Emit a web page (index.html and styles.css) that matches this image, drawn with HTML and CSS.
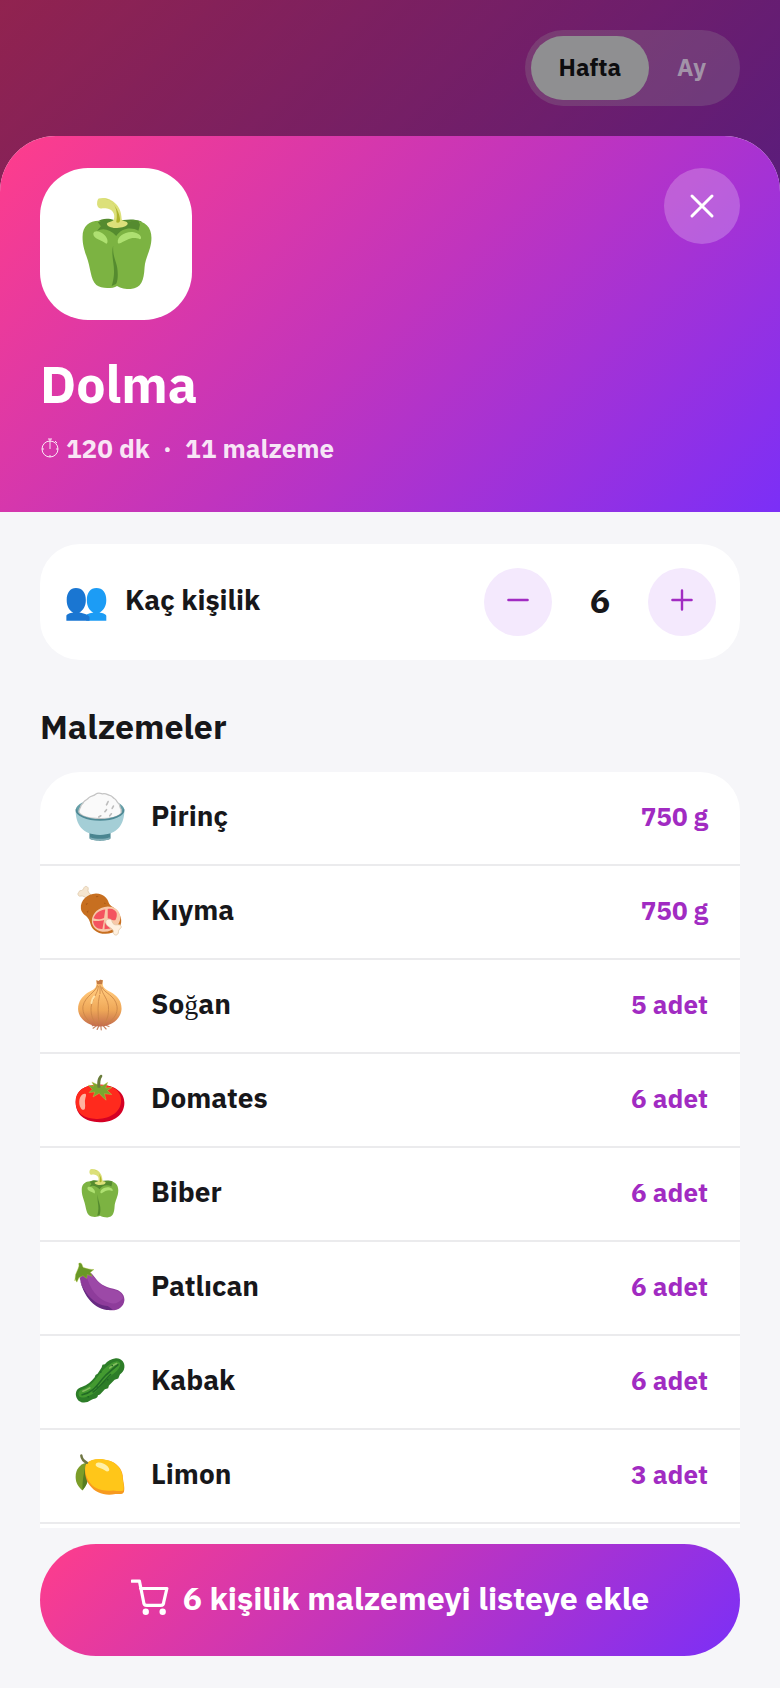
FILE: index.html
```html
<!DOCTYPE html>
<html lang="tr">
<head>
<meta charset="utf-8">
<meta name="viewport" content="width=device-width, initial-scale=1">
<title>Dolma</title>
<link rel="stylesheet" href="styles.css">
</head>
<body>
<svg class="defs" aria-hidden="true">
  <symbol id="pepper" viewBox="0 0 128 128">
    <path fill="#558b2f" d="M38 37c6-6 16-5 22-3 9 2 22-4 36 2l3 14-33 14-32-14z"/>
    <path fill="#7cb342" d="M19 56c0-14 9-21 21-21 10 1 13 8 21 12 8-3 12-11 24-12 15-1 24 8 24 22 0 16-8 25-9 39-1 17-4 27-18 28-7 0-13-1-18-4-6 4-21 4-27-1-8-8-7-22-13-38-3-9-5-15-5-25z"/>
    <path fill="#558b2f" d="M39 37c9-5 18 2 23 6 8-3 13-9 30-8l2 5-2 8c-9-5-22-4-29 7-8-9-17-11-25-7l5-6z"/>
    <path fill="#558b2f" d="M59 67c-4 18 5 27-1 50l-1 3 5-2c2-1 3-7 3-13 0-17-7-20-6-38z"/>
    <path fill="#aee071" d="M33 52c1-6 11-3 15 2 5 5 4 11 2 11-6-5-17-6-17-13zM65 63c-1-7 10-15 21-13 10 2 11 9 8 9-11-4-17 1-25 5-2 1-4 1-4-1z"/>
    <path fill="#dce07a" d="M40 6c12-4 30 6 30 26 0 5 8 2 8 7-2 7-24 7-27 1-2-4 8-3 9-7 2-7-2-13-9-14-8-1-11 2-13-5 0-3 0-6 2-8z"/>
    <path fill="#afb42b" d="M48 6c13 3 18 15 15 31 10 4 3-16-3-23-3-4-7-7-12-8z"/>
  </symbol>
  <symbol id="rice" viewBox="0 0 128 128">
    <path fill="#4a8590" d="M38 102h52v15c-8 7-44 7-52 0z"/>
    <path fill="#82aeb6" d="M40 114c12 5 36 5 48 0v4c-10 5-38 5-48 0z"/>
    <ellipse cx="64" cy="47" rx="60" ry="26" fill="#669fa8"/>
    <path fill="#fafafa" stroke="#c4c4c4" stroke-width="3" d="M12 52c0-9 5-11 5-16 3-5 6-5 7-9 5-6 9-5 12-10 6-6 13-4 17-9 7-5 13-2 17-1 8-3 13 3 18 4 7 1 7 6 12 8 5 3 5 8 9 11 6 6 2 9 7 15v10c-14 18-93 18-104-3z"/>
    <path fill="none" stroke="#bdbdbd" stroke-width="4" stroke-linecap="round" d="M84 26l-3 6M97 37l-3 6M80 46l-4 5M92 56l-4 5M66 61l-5 3M82 31l-2 3"/>
    <path fill="#a4ced6" d="M4 47c1 11 25 22 60 22s59-11 60-22c0 35-16 61-60 61S4 82 4 47z"/>
    <path fill="none" stroke="#4f8995" stroke-width="4" d="M6 45c-2 14 25 26 58 26s60-12 58-26"/>
  </symbol>
  <symbol id="meat" viewBox="0 0 128 128">
    <path fill="#f5e5cf" stroke="#dfc9aa" stroke-width="2" d="M12 18c-5 3-1 12 5 9 6-1 11 3 15 8l9-12c-5-3-8-8-6-13 1-6-7-9-10-4-2 6-5 8-10 8-2 1-3 2-3 4z"/>
    <path fill="#c76f20" d="M17 58c-2-21 16-36 37-37 20 0 29 13 32 24 3 8 15 10 23 22 12 18 8 34-3 44-13 12-43 13-57-1-10-10-8-21-15-29-6-7-16-11-17-23z"/>
    <path fill="#a75816" d="M29 46l6-2-5 6zM54 27l7 0-5 4zM31 66l5-4-2 7zM49 76l5-2-4 5zM75 43l4 3-5 0z"/>
    <ellipse cx="79" cy="84" rx="36" ry="30" fill="#f8c8a8" transform="rotate(-24 79 84)"/>
    <path fill="#f4535f" d="M48 82c4-12 15-21 29-22l-3 21c-8 4-17 5-26 1zM83 59c11-2 19 2 22 10 1 7 0 12-3 17-7 2-13-1-19-4zM47 88c10 2 20 0 27-2l-4 22c-13 1-22-6-23-20zM76 91l14 16-15 2z"/>
    <path fill="#fff0df" stroke="#dfc9aa" stroke-width="2" d="M78 91c1-9 15-10 16 0 2 6 7 8 13 7 8-2 13 6 6 10-4 2-3 6-4 10-2 8-12 6-12-1 1-6-4-10-11-14-5-3-8-7-8-12z"/>
  </symbol>
  <symbol id="onion" viewBox="0 0 128 128">
    <linearGradient id="onion-skin" x2="0" y2="1"><stop offset=".25" stop-color="#ffc576"/><stop offset=".65" stop-color="#eea758"/><stop offset="1" stop-color="#c26a4b"/></linearGradient>
    <path fill="none" stroke="#c78463" stroke-width="3" stroke-linecap="round" d="M59 112l-12 9M62 114l-5 10M66 114l1 11M70 113l9 10M74 112l12 5M55 113l-10 2"/>
    <path fill="url(#onion-skin)" d="M55 3l5 2 5-3 6 1c-2 17 2 20 19 29 18 10 28 24 27 43-2 22-21 40-53 42-32-2-53-20-54-43 0-18 10-33 29-43 15-8 17-11 16-28z"/>
    <path fill="#c47b45" d="M55 3l5 2 5-3 6 1-2 10H57z"/>
    <path fill="none" stroke="#c98445" stroke-width="2" d="M58 15C55 32 27 42 22 67c-2 20 10 32 19 41M60 17C59 37 45 45 42 70c-1 21 5 31 14 43M64 15v22M66 18c3 22 20 30 19 57 0 20-6 29-14 38M69 20c4 14 33 20 37 48 2 18-8 29-20 39M63 39c-5 22-5 45-1 73"/>
    <path fill="none" stroke="#ffe2a8" stroke-width="5" stroke-linecap="round" d="M50 43c-5 6-7 11-7 16"/>
  </symbol>
  <symbol id="tomato" viewBox="0 0 128 128">
    <path fill="#d50024" d="M4 72c0-28 21-42 53-43 39-2 67 16 67 44 0 30-25 48-61 48C27 121 4 102 4 72z"/>
    <path fill="#ff2a1d" d="M4 71c0-27 21-41 53-42 36-2 59 14 59 38 0 28-25 45-58 46-30 1-54-12-54-42z"/>
    <path fill="#ffb3a0" d="M26 51c5 0 4 5 2 11-3 9 1 16-1 25-1 5-7 5-10 0-8-13-4-35 9-36z"/>
    <path fill="#7ba52f" stroke="#cbc84c" stroke-width="1" d="M61 30L44 22l5 10-14-2 10 10-8 8 14-1-4 12 15-9 6 7 11 10-4-16 18 2-11-10 12-8-16 2 5-14-14 9z"/>
    <path fill="#6a7d3b" d="M58 36c-2-14 0-25 7-31 4-2 6 2 4 5-4 5-5 14-4 26z"/>
  </symbol>
  <symbol id="eggplant" viewBox="0 0 128 128">
    <path fill="#8e3c9b" d="M14 42C25 26 39 22 48 36c13 18 26 28 49 32 18 4 28 14 27 29-2 17-17 26-36 24C51 115 24 88 14 42z"/>
    <path fill="#a04dab" d="M30 34c10-4 17 3 24 12 12 13 23 20 42 25 15 3 22 8 25 20-9 11-21 17-34 12-29-8-48-33-57-69z" opacity=".75"/>
    <path fill="#682a82" d="M14 43c8 34 37 66 69 68l13 9c-38 6-72-27-82-77z"/>
    <path fill="#699827" stroke="#adc33c" stroke-width="1" d="M10 19l2-6c1-5-2-6 1-8 7-2 7 7 10 11 9 3 18 5 26 5l-9 7 5 10-12-5-2 10-9-7-10 5-5 11-4-7-1 4 2-16z"/>
  </symbol>
  <symbol id="cucumber" viewBox="0 0 128 128">
    <path fill="#2d7d28" d="M5 101c-2-12 4-19 14-22 14-5 24-14 32-24l2-6 5-3 10-15 2-7 6-1c6-8 16-14 27-15 13-1 23 10 21 23-1 8-5 13-11 17l-4 10-9 3-14 14-2 7-8 2-12 13-5 2c-2 11-10 6-17 12-15 11-33 7-37-10z"/>
    <path fill="#439a30" d="M11 96c0-9 8-10 16-14 24-12 34-38 53-53 14-12 31-20 34-7 0 16-25 28-34 38-14 15-21 31-43 40-13 6-25 8-26-4z"/>
    <path fill="none" stroke="#226b25" stroke-width="4" stroke-linecap="round" d="M20 98c31-7 40-30 57-47C88 41 98 32 108 24M47 91c17-11 30-32 43-43"/>
    <path fill="none" stroke="#85bd60" stroke-width="4" stroke-linecap="round" d="M22 89c7-2 12-5 17-8M88 32c6-6 11-9 17-11"/>
    <g fill="#1d6523"><circle cx="66" cy="42" r="2"/><circle cx="57" cy="79" r="2"/><circle cx="83" cy="61" r="2"/><circle cx="94" cy="26" r="2"/><circle cx="35" cy="103" r="2"/></g>
  </symbol>
  <symbol id="lemon" viewBox="0 0 128 128">
    <path fill="#7c9d29" d="M30 34C14 38 4 51 4 68c0 16 7 25 17 34 10-12 15-24 14-39z"/>
    <path fill="#567c21" d="M30 35c-4 18-10 40-9 66 12-13 15-27 14-42z"/>
    <path fill="#f79a20" d="M30 36c14-12 35-14 57-7 19 6 30 19 33 36 0 13 6 28 3 40-3 9-14 5-21 6-27 5-49-3-63-21-12-16-15-38-9-54z"/>
    <path fill="#ffc619" d="M30 36c14-13 36-14 57-7 18 6 29 19 32 36 0 12 5 24 3 35-3 6-16 3-25 2-31 3-49-5-60-22-9-15-12-31-7-44z"/>
    <path fill="#fff0a5" d="M54 36c6-6 20-1 27 5 6 5 8 12 3 14-6 1-8-4-14-6-8-3-20-6-16-13z"/>
    <path fill="none" stroke="#6f7644" stroke-width="6" stroke-linecap="round" d="M18 16c1 9 6 14 14 18"/>
  </symbol>
</svg>

<div class="screen">
  <header class="topbar">
    <div class="toggle">
      <button type="button" class="toggle-item is-active">Hafta</button>
      <button type="button" class="toggle-item">Ay</button>
    </div>
  </header>

  <main class="sheet">
    <section class="hero">
      <div class="hero-top">
        <div class="dish"><svg class="dish-icon" aria-hidden="true"><use href="#pepper"/></svg></div>
        <button type="button" class="close" aria-label="Kapat">
          <svg class="icon-close" viewBox="0 0 26 26" aria-hidden="true"><path d="M3 3l20 20M23 3L3 23"/></svg>
        </button>
      </div>
      <h1 class="title">Dolma</h1>
      <p class="meta">
        <svg class="icon-timer" viewBox="0 0 18 20" aria-hidden="true"><circle cx="9" cy="11" r="8"/><path d="M9 11V1M7 1h4M14 3l2 2M9 17v2M1 11h2M15 11h2"/></svg>
        <span>120 dk</span><span class="dot">·</span><span>11 malzeme</span>
      </p>
    </section>

    <div class="content">
      <section class="servings">
        <svg class="people" viewBox="0 0 122 100" aria-hidden="true">
          <path fill="#1c9cf5" d="M91 0c19 0 30 14 30 36 0 18-8 32-21 38 10 2 21 4 21 11v14H60V84c0-6 13-8 22-10-13-6-20-20-20-38C62 14 73 0 91 0z"/>
          <path fill="#1a76d2" d="M29 0c19 0 30 14 30 36 0 18-8 32-20 38 13 2 31 8 31 14v11H0V85c0-7 11-9 21-11C8 68 1 54 1 36 1 14 12 0 29 0z"/>
        </svg>
        <span class="servings-label">Kaç kişilik</span>
        <div class="stepper">
          <button type="button" class="step" aria-label="Azalt"><svg class="icon-step" viewBox="0 0 20 20" aria-hidden="true"><path d="M2 10h16"/></svg></button>
          <output class="count">6</output>
          <button type="button" class="step" aria-label="Artır"><svg class="icon-step" viewBox="0 0 20 20" aria-hidden="true"><path d="M2 10h16M10 2v16"/></svg></button>
        </div>
      </section>

      <h2 class="heading">Malzemeler</h2>
      <ul class="list">
        <li class="row"><svg class="emoji" aria-hidden="true"><use href="#rice"/></svg><span class="name">Pirinç</span><span class="amount">750 g</span></li>
        <li class="row"><svg class="emoji" aria-hidden="true"><use href="#meat"/></svg><span class="name">Kıyma</span><span class="amount">750 g</span></li>
        <li class="row"><svg class="emoji" aria-hidden="true"><use href="#onion"/></svg><span class="name">So<span class="serif">ğ</span>an</span><span class="amount">5 adet</span></li>
        <li class="row"><svg class="emoji" aria-hidden="true"><use href="#tomato"/></svg><span class="name">Domates</span><span class="amount">6 adet</span></li>
        <li class="row"><svg class="emoji" aria-hidden="true"><use href="#pepper"/></svg><span class="name">Biber</span><span class="amount">6 adet</span></li>
        <li class="row"><svg class="emoji" aria-hidden="true"><use href="#eggplant"/></svg><span class="name">Patlıcan</span><span class="amount">6 adet</span></li>
        <li class="row"><svg class="emoji" aria-hidden="true"><use href="#cucumber"/></svg><span class="name">Kabak</span><span class="amount">6 adet</span></li>
        <li class="row"><svg class="emoji" aria-hidden="true"><use href="#lemon"/></svg><span class="name">Limon</span><span class="amount">3 adet</span></li>
      </ul>
    </div>

    <footer class="footer">
      <button type="button" class="add">
        <svg class="icon-cart" viewBox="0 0 36 36" aria-hidden="true"><path d="M1 2h7l4 20q0 3 3 3h13q3 0 3-3l3-13H9"/><circle cx="14" cy="31" r="3"/><circle cx="30" cy="31" r="3"/></svg>
        <span>6 kişilik malzemeyi listeye ekle</span>
      </button>
    </footer>
  </main>
</div>
</body>
</html>
```

FILE: styles.css
```css
:root {
  --brand: linear-gradient(135deg, #ff3d8b 0%, #c034be 50%, #7b2ff7 100%);
  --ink: #17171a;
  --page: #f6f6f9;
  --accent: #a12bc2;
}

* { box-sizing: border-box; }

body {
  margin: 0;
  color: var(--ink);
  font-family: "IBM Plex Sans", "Noto Sans", "Open Sans", sans-serif;
  font-weight: 700;
}

button {
  border: 0;
  padding: 0;
  font: inherit;
  color: inherit;
  cursor: pointer;
}

.defs { position: absolute; width: 0; height: 0; }

.screen {
  display: flex;
  flex-direction: column;
  height: 100vh;
  background:
    linear-gradient(rgba(0, 0, 0, 0.43), rgba(0, 0, 0, 0.43)),
    var(--brand) top / 100% 540px no-repeat;
}

.topbar {
  display: flex;
  justify-content: flex-end;
  padding: 30px 40px;
}

.toggle {
  display: flex;
  padding: 6px;
  border-radius: 38px;
  background: rgba(148, 148, 148, 0.25);
}

.toggle-item {
  height: 64px;
  padding: 0 28px 2px;
  border-radius: 32px;
  background: transparent;
  color: #a293a8;
  font-size: 24px;
}

.toggle-item.is-active { background: #8f8f91; color: #0d0d0f; }

.sheet {
  display: flex;
  flex: 1;
  flex-direction: column;
  min-height: 0;
  overflow: hidden;
  border-radius: 56px 56px 0 0;
  background: var(--page);
}

.hero {
  padding: 32px 40px 44px;
  background: var(--brand);
  color: #fff;
}

.hero-top {
  display: flex;
  align-items: flex-start;
  justify-content: space-between;
}

.dish {
  display: grid;
  place-items: center;
  width: 152px;
  height: 152px;
  padding: 0 0 2px 2px;
  border-radius: 48px;
  background: #fff;
}

.dish-icon { width: 98px; height: 98px; }

.close {
  display: grid;
  place-items: center;
  width: 76px;
  height: 76px;
  border-radius: 50%;
  background: rgba(255, 255, 255, 0.22);
}

.icon-close {
  width: 26px;
  height: 26px;
  fill: none;
  stroke: #fff;
  stroke-width: 3;
  stroke-linecap: round;
}

.title {
  margin: 32px 0 0;
  font-size: 52px;
  line-height: 64px;
}

.meta {
  display: flex;
  align-items: center;
  margin: 12px 0 0;
  color: rgba(255, 255, 255, 0.88);
  font-size: 26px;
  line-height: 40px;
}

.icon-timer {
  width: 20px;
  height: 20px;
  margin-right: 6px;
  fill: none;
  stroke: currentColor;
  stroke-width: 1;
}

.dot { padding: 0 13px; }

.content {
  display: flex;
  flex: 1;
  flex-direction: column;
  min-height: 0;
  overflow: hidden;
  padding: 32px 40px 0;
}

.servings {
  display: flex;
  flex: none;
  align-items: center;
  padding: 24px 24px 24px 26px;
  border-radius: 40px;
  background: #fff;
}

.people { width: 41px; height: 37px; margin-right: 18px; padding-top: 4px; }

.servings-label { flex: 1; padding-bottom: 6px; font-size: 28px; }

.stepper { display: flex; align-items: center; }

.step {
  display: grid;
  place-items: center;
  width: 68px;
  height: 68px;
  padding-bottom: 4px;
  border-radius: 50%;
  background: #f4e9fd;
}

.icon-step {
  width: 24px;
  height: 24px;
  fill: none;
  stroke: var(--accent);
  stroke-width: 2;
  stroke-linecap: round;
}

.count { width: 96px; padding-bottom: 4px; font-size: 34px; text-align: center; }

.heading {
  flex: none;
  margin: 44px 0 24px;
  font-size: 34px;
  line-height: 44px;
}

.list {
  flex: 1;
  margin: 0;
  padding: 0;
  border-radius: 40px 40px 0 0;
  background: #fff;
  list-style: none;
}

.row {
  display: flex;
  align-items: center;
  height: 94px;
  padding: 0 32px 2px 34px;
  border-bottom: 2px solid #ebebed;
}

.emoji { width: 52px; height: 52px; }

.name { flex: 1; padding: 0 0 4px 25px; font-size: 28px; }

.serif { font-family: "Liberation Serif", serif; font-weight: 400; line-height: 1; }

.amount { padding-bottom: 2px; color: var(--accent); font-size: 26px; }

.footer { padding: 16px 40px 32px; }

.add {
  display: flex;
  align-items: center;
  justify-content: center;
  width: 100%;
  height: 112px;
  padding-bottom: 4px;
  border-radius: 56px;
  background: var(--brand);
  color: #fff;
  font-size: 32px;
}

.icon-cart {
  width: 38px;
  height: 38px;
  margin-right: 14px;
  fill: none;
  stroke: #fff;
  stroke-width: 3;
  stroke-linecap: round;
  stroke-linejoin: round;
}

.icon-cart circle { fill: #fff; stroke: none; }
```
